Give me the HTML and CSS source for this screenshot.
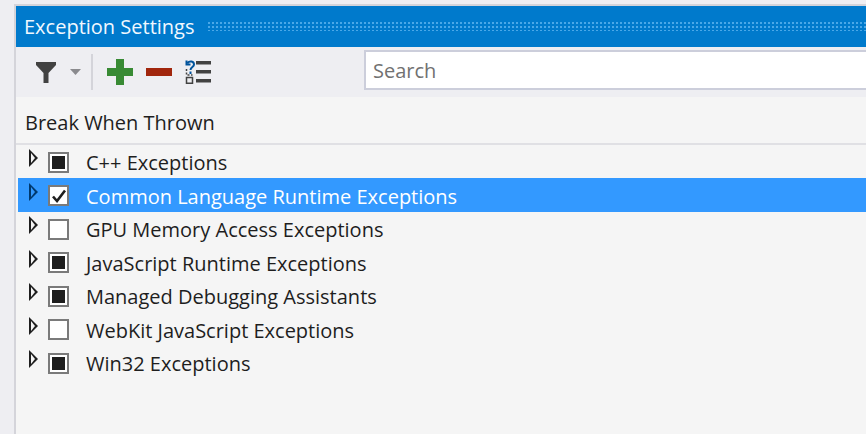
FILE: index.html
```html
<!DOCTYPE html>
<html lang="en">
<head>
    <meta charset="UTF-8">
    <meta name="viewport" content="width=device-width, initial-scale=1.0">
    <title>Exception Settings</title>
    <link rel="stylesheet" href="styles.css">
</head>
<body>

    <div class="panel">
        <div class="title-bar">
            <span class="title">Exception Settings</span>
            <span class="grip"></span>
        </div>

        <div class="toolbar">
            <svg class="icon-filter" width="22" height="24" viewBox="0 0 22 24">
                <path d="M1 2H21V5L13.5 13V23H8.5V13L1 5Z" fill="#424242"/>
            </svg>
            <svg class="icon-caret" width="11" height="6" viewBox="0 0 11 6">
                <path d="M0 0H11L5.5 6Z" fill="#8a8a8e"/>
            </svg>
            <span class="separator"></span>
            <svg class="icon-add" width="26" height="26" viewBox="0 0 26 26">
                <path d="M9 0H17V9H26V17H17V26H9V17H0V9H9Z" fill="#388a34"/>
            </svg>
            <svg class="icon-remove" width="26" height="8" viewBox="0 0 26 8">
                <rect width="26" height="8" fill="#a1260d"/>
            </svg>
            <svg class="icon-restore" width="26" height="24" viewBox="0 0 26 24">
                <path d="M11 1H26V4.500H11ZM11 10H26V13.500H11ZM11 19H26V22.500H11Z" fill="#424242"/>
                <path d="M1.500 17.500H7.500V23.200H1.500Z" fill="none" stroke="#424242" stroke-width="1.500"/>
                <path d="M1.500 9V15H7.500" fill="none" stroke="#424242" stroke-width="1.500" stroke-dasharray="2 1.500"/>
                <path d="M2.500 3C4.500 .5 9 1 9 4.500C9 7 5.500 7 5.500 10M5.500 11.500V14M1.500 .5V4.500H5.500" fill="none" stroke="#00539c" stroke-width="2"/>
            </svg>
            <div class="search">Search</div>
        </div>

        <div class="column-header">Break When Thrown</div>

        <ul class="tree">
            <li class="tree-row"><span class="arrow"></span><span class="checkbox mixed"></span><span class="label">C++ Exceptions</span></li>
            <li class="tree-row selected">
                <span class="arrow"></span>
                <span class="checkbox">
                    <svg width="16" height="14" viewBox="0 0 16 14"><path d="M2 7.500L6 12L14 1.500" fill="none" stroke="#1e1e1e" stroke-width="2.600"/></svg>
                </span>
                <span class="label">Common Language Runtime Exceptions</span>
            </li>
            <li class="tree-row"><span class="arrow"></span><span class="checkbox"></span><span class="label">GPU Memory Access Exceptions</span></li>
            <li class="tree-row"><span class="arrow"></span><span class="checkbox mixed"></span><span class="label">JavaScript Runtime Exceptions</span></li>
            <li class="tree-row"><span class="arrow"></span><span class="checkbox mixed"></span><span class="label">Managed Debugging Assistants</span></li>
            <li class="tree-row"><span class="arrow"></span><span class="checkbox"></span><span class="label">WebKit JavaScript Exceptions</span></li>
            <li class="tree-row"><span class="arrow"></span><span class="checkbox mixed"></span><span class="label">Win32 Exceptions</span></li>
        </ul>
    </div>

</body>
</html>
```

FILE: styles.css
```css
html, body {
    height: 100%;
}

body {
    font-family: 'Open Sans', 'Noto Sans', sans-serif;
    background-color: #eeeef2;
    color: #1e1e1e;
    margin: 0;
    padding: 4px 0 0 14px;
    box-sizing: border-box;
    overflow: hidden;
}

.panel {
    height: 100%;
    border: solid #d4d4da;
    border-width: 2px 0 0 2px;
    background-color: #f5f5f5;
}

.title-bar {
    height: 41px;
    background-color: #007acc;
    display: flex;
    align-items: center;
    padding-left: 8px;
    gap: 13px;
}

.title {
    color: #f0f8ff;
    font-size: 20px;
    white-space: nowrap;
}

.grip {
    flex: 1;
    height: 10px;
    margin-top: -1px;
    background-image: radial-gradient(circle, #4aa8e8 1px, transparent 1.1px);
    background-size: 4px 4px;
}

.toolbar {
    height: 50px;
    background-color: #eeeef2;
    display: flex;
    align-items: center;
    padding-left: 19px;
}

.icon-caret {
    margin-left: 13px;
}

.separator {
    width: 2px;
    height: 36px;
    margin: 0 14px 0 10px;
    background-color: #d4d4da;
}

.icon-remove {
    margin-left: 13px;
}

.icon-restore {
    margin-left: 13px;
}

.search {
    flex: 1;
    height: 36px;
    margin: -4px 0 0 153px;
    border: solid #cccedb;
    border-width: 2px 0 2px 2px;
    background-color: #fff;
    color: #717171;
    font-size: 20px;
    line-height: 37px;
    padding-left: 7px;
}

.column-header {
    height: 46px;
    line-height: 51px;
    padding-left: 9px;
    font-size: 20px;
    border-bottom: 2px solid #e0e0e4;
}

.tree {
    list-style: none;
    margin: 0;
    padding: 0.25px 0 0 2px;
}

.tree-row {
    height: 33.5px;
    display: flex;
    align-items: center;
    font-size: 20px;
    padding-left: 10px;
}

.tree-row.selected {
    background-color: #3399ff;
    box-shadow: 0 -1px 0 #3399ff;
}

.tree-row.selected .label {
    color: #fff;
}

.tree-row.selected .arrow {
    border-left-color: #00396e;
}

.tree-row.selected .arrow::after {
    border-left-color: #3399ff;
}

.arrow {
    position: relative;
    width: 0;
    height: 0;
    margin: -8px 0 0 1px;
    border-style: solid;
    border-width: 9px 0 9px 9px;
    border-color: transparent transparent transparent #1e1e1e;
}

.arrow::after {
    content: "";
    position: absolute;
    left: -7px;
    top: -5px;
    border-style: solid;
    border-width: 5px 0 5px 4px;
    border-color: transparent transparent transparent #f5f5f5;
}

.checkbox {
    width: 17px;
    height: 17px;
    margin-left: 10px;
    border: 2px solid #7a7a7a;
    background-color: #fff;
    display: flex;
    align-items: center;
    justify-content: center;
    flex: none;
}

.checkbox.mixed::after {
    content: "";
    width: 13px;
    height: 13px;
    background-color: #1e1e1e;
}

.label {
    margin: 1px 0 0 17px;
    white-space: nowrap;
}
```
